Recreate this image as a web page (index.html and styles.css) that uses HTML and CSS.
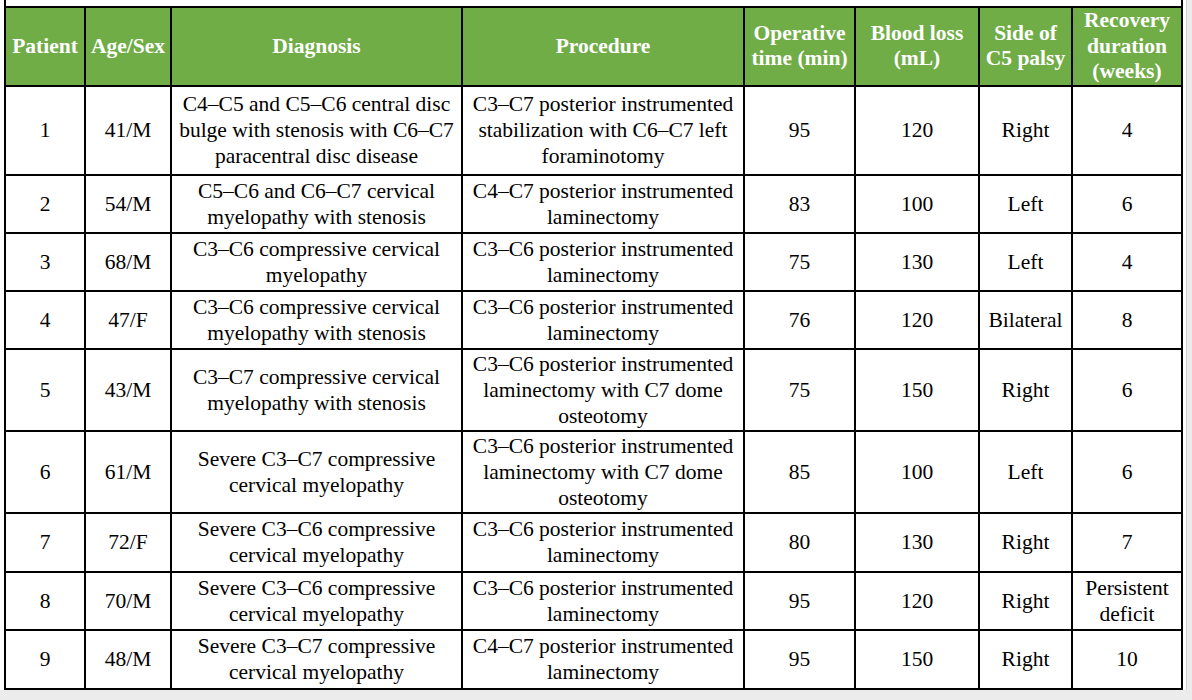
FILE: index.html
```html
<!DOCTYPE html>
<html lang="en">
<head>
<meta charset="utf-8">
<title>C5 palsy cases</title>
<link rel="stylesheet" href="styles.css">
</head>
<body>
<div class="sheet">
  <div class="frame">
    <table class="cases">
      <colgroup>
        <col class="c1"><col class="c2"><col class="c3"><col class="c4"><col class="c5"><col class="c6"><col class="c7"><col class="c8">
      </colgroup>
      <thead>
        <tr class="r-head">
          <th>Patient</th>
          <th>Age/Sex</th>
          <th>Diagnosis</th>
          <th>Procedure</th>
          <th>Operative<br>time (min)</th>
          <th>Blood loss<br>(mL)</th>
          <th>Side of<br>C5 palsy</th>
          <th>Recovery<br>duration<br>(weeks)</th>
        </tr>
      </thead>
      <tbody>
        <tr class="r-89">
          <td>1</td><td>41/M</td>
          <td>C4–C5 and C5–C6 central disc<br>bulge with stenosis with C6–C7<br>paracentral disc disease</td>
          <td>C3–C7 posterior instrumented<br>stabilization with C6–C7 left<br>foraminotomy</td>
          <td>95</td><td>120</td><td>Right</td><td>4</td>
        </tr>
        <tr class="r-58">
          <td>2</td><td>54/M</td>
          <td>C5–C6 and C6–C7 cervical<br>myelopathy with stenosis</td>
          <td>C4–C7 posterior instrumented<br>laminectomy</td>
          <td>83</td><td>100</td><td>Left</td><td>6</td>
        </tr>
        <tr class="r-58">
          <td>3</td><td>68/M</td>
          <td>C3–C6 compressive cervical<br>myelopathy</td>
          <td>C3–C6 posterior instrumented<br>laminectomy</td>
          <td>75</td><td>130</td><td>Left</td><td>4</td>
        </tr>
        <tr class="r-58">
          <td>4</td><td>47/F</td>
          <td>C3–C6 compressive cervical<br>myelopathy with stenosis</td>
          <td>C3–C6 posterior instrumented<br>laminectomy</td>
          <td>76</td><td>120</td><td>Bilateral</td><td>8</td>
        </tr>
        <tr class="r-82">
          <td>5</td><td>43/M</td>
          <td>C3–C7 compressive cervical<br>myelopathy with stenosis</td>
          <td>C3–C6 posterior instrumented<br>laminectomy with C7 dome<br>osteotomy</td>
          <td>75</td><td>150</td><td>Right</td><td>6</td>
        </tr>
        <tr class="r-82">
          <td>6</td><td>61/M</td>
          <td>Severe C3–C7 compressive<br>cervical myelopathy</td>
          <td>C3–C6 posterior instrumented<br>laminectomy with C7 dome<br>osteotomy</td>
          <td>85</td><td>100</td><td>Left</td><td>6</td>
        </tr>
        <tr class="r-59">
          <td>7</td><td>72/F</td>
          <td>Severe C3–C6 compressive<br>cervical myelopathy</td>
          <td>C3–C6 posterior instrumented<br>laminectomy</td>
          <td>80</td><td>130</td><td>Right</td><td>7</td>
        </tr>
        <tr class="r-58">
          <td>8</td><td>70/M</td>
          <td>Severe C3–C6 compressive<br>cervical myelopathy</td>
          <td>C3–C6 posterior instrumented<br>laminectomy</td>
          <td>95</td><td>120</td><td>Right</td><td>Persistent<br>deficit</td>
        </tr>
        <tr class="r-59">
          <td>9</td><td>48/M</td>
          <td>Severe C3–C7 compressive<br>cervical myelopathy</td>
          <td>C4–C7 posterior instrumented<br>laminectomy</td>
          <td>95</td><td>150</td><td>Right</td><td>10</td>
        </tr>
      </tbody>
    </table>
  </div>
</div>
</body>
</html>
```

FILE: styles.css
```css
html, body {
  margin: 0;
  padding: 0;
}

body {
  background: #ececec;
  font-family: "Liberation Serif", "Times New Roman", serif;
  color: #000;
}

.sheet {
  box-sizing: border-box;
  width: 1187px;
  height: 690px;
  background: #fff;
  border-right: 1px solid #d2d2d2;
  padding-left: 4px;
}

.frame {
  box-sizing: border-box;
  width: 1179px;
  padding-top: 6px;
  border-left: 2px solid #000;
  border-right: 2px solid #000;
}

.cases {
  width: 1175px;
  table-layout: fixed;
  border-collapse: separate;
  border-spacing: 0;
  border-top: 2px solid #000;
  font-size: 21.5px;
}

.c1 { width: 80px; }
.c2 { width: 86px; }
.c3 { width: 291px; }
.c4 { width: 282px; }
.c5 { width: 111px; }
.c6 { width: 124px; }
.c7 { width: 93px; }
.c8 { width: 108px; }

.cases th,
.cases td {
  box-sizing: border-box;
  padding: 0 3px;
  text-align: center;
  vertical-align: middle;
  border-right: 2px solid #000;
  border-bottom: 2px solid #000;
  white-space: nowrap;
}

.cases th:last-child,
.cases td:last-child {
  border-right: 0;
}

.cases th {
  background: #70ad47;
  color: #fff;
  font-weight: bold;
  line-height: 25.5px;
}

.cases td {
  line-height: 26px;
}

.r-head { height: 77px; }
.r-89 { height: 89px; }
.r-82 { height: 82px; }
.r-59 { height: 59px; }
.r-58 { height: 58px; }
```
